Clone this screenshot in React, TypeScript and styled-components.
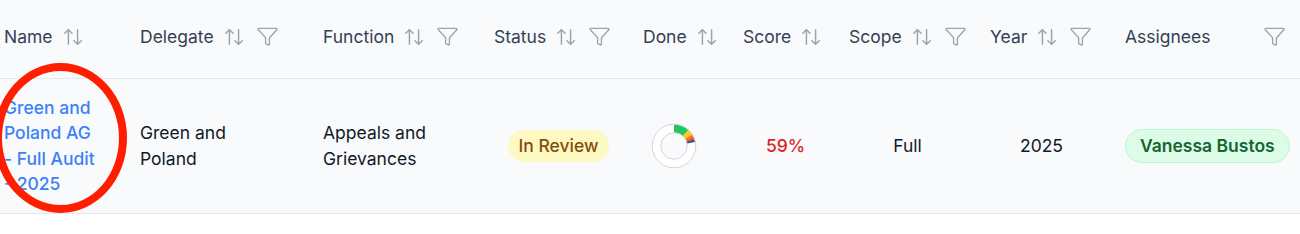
import React from "react";
import styled, { createGlobalStyle } from "styled-components";

const GlobalStyle = createGlobalStyle`
  html, body {
    margin: 0;
    padding: 0;
    background: #ffffff;
  }
  body {
    font-family: Inter, "Noto Sans", "Liberation Sans", sans-serif;
    -webkit-font-smoothing: antialiased;
  }
`;

type Column = {
  key: string;
  label: string;
  width: number;
  sortable?: boolean;
  filterable?: boolean;
  spread?: boolean;
};

const COLUMNS: Column[] = [
  { key: "name", label: "Name", width: 128, sortable: true },
  { key: "delegate", label: "Delegate", width: 183, sortable: true, filterable: true },
  { key: "function", label: "Function", width: 171, sortable: true, filterable: true },
  { key: "status", label: "Status", width: 149, sortable: true, filterable: true },
  { key: "done", label: "Done", width: 100, sortable: true },
  { key: "score", label: "Score", width: 106, sortable: true },
  { key: "scope", label: "Scope", width: 141, sortable: true, filterable: true },
  { key: "year", label: "Year", width: 135, sortable: true, filterable: true },
  { key: "assignees", label: "Assignees", width: 187, filterable: true, spread: true },
];

// slices of the "done" ring, in degrees clockwise from 12 o'clock
const DONE_SLICES = [
  { from: 0, to: 42, color: "#22c55e" },
  { from: 42, to: 58, color: "#facc15" },
  { from: 58, to: 65, color: "#f97316" },
  { from: 65, to: 71, color: "#ef4444" },
  { from: 71, to: 79, color: "#475569" },
];

const SortIcon = () => (
  <svg width="22" height="22" viewBox="0 0 24 24" fill="none" stroke="currentColor" strokeWidth="1.6" strokeLinecap="round" strokeLinejoin="round">
    <path d="m21 16-4 4-4-4" />
    <path d="M17 20V4" />
    <path d="m3 8 4-4 4 4" />
    <path d="M7 4v16" />
  </svg>
);

const FilterIcon = () => (
  <svg width="23" height="21" viewBox="0 0 24 22" fill="none" stroke="currentColor" strokeWidth="1.45" strokeLinecap="round" strokeLinejoin="round">
    <path d="M3 2.5h18a.9.9 0 0 1 .66 1.5l-7.2 8.1a2 2 0 0 0-.46 1.3V19a.9.9 0 0 1-1.3.8l-2.1-1.05a1 1 0 0 1-.6-.9v-4.9a2 2 0 0 0-.46-1.3L2.34 4A.9.9 0 0 1 3 2.5z" />
  </svg>
);

const polar = (r: number, deg: number) => {
  const a = ((deg - 90) * Math.PI) / 180;
  return [23 + r * Math.cos(a), 23 + r * Math.sin(a)];
};

const slicePath = (from: number, to: number, r1: number, r2: number) => {
  const [ax, ay] = polar(r2, from);
  const [bx, by] = polar(r2, to);
  const [cx, cy] = polar(r1, to);
  const [dx, dy] = polar(r1, from);
  const large = to - from > 180 ? 1 : 0;
  return `M${ax} ${ay} A${r2} ${r2} 0 ${large} 1 ${bx} ${by} L${cx} ${cy} A${r1} ${r1} 0 ${large} 0 ${dx} ${dy} Z`;
};

const DoneRing = () => (
  <svg width="46" height="46" viewBox="0 0 46 46">
    <circle cx="23" cy="23" r="17.5" fill="none" stroke="#ffffff" strokeWidth="9" />
    {DONE_SLICES.map((s) => (
      <path key={s.from} d={slicePath(s.from, s.to, 13.5, 21.5)} fill={s.color} />
    ))}
    <circle cx="23" cy="23" r="21.8" fill="none" stroke="#d1d5db" strokeWidth="1" />
    <circle cx="23" cy="23" r="13.2" fill="none" stroke="#d1d5db" strokeWidth="1" />
  </svg>
);

export default function App() {
  return (
    <>
      <GlobalStyle />
      <Frame>
        <Table>
          <colgroup>
            {COLUMNS.map((c) => (
              <col key={c.key} style={{ width: c.width }} />
            ))}
          </colgroup>
          <thead>
            <tr>
              {COLUMNS.map((c, i) => (
                <HeadCell key={c.key} $first={i === 0}>
                  <HeadInner $spread={c.spread}>
                    <HeadLabel>{c.label}</HeadLabel>
                    <Icons>
                      {c.sortable && (
                        <IconBtn>
                          <SortIcon />
                        </IconBtn>
                      )}
                      {c.filterable && (
                        <IconBtn>
                          <FilterIcon />
                        </IconBtn>
                      )}
                    </Icons>
                  </HeadInner>
                </HeadCell>
              ))}
            </tr>
          </thead>
          <tbody>
            <tr>
              <Cell $first>
                <NameLink href="#">Green and Poland AG - Full Audit - 2025</NameLink>
              </Cell>
              <Cell>
                <Wrap $width={110}>Green and Poland</Wrap>
              </Cell>
              <Cell>
                <Wrap $width={120}>Appeals and Grievances</Wrap>
              </Cell>
              <Cell $align="center" $padRight={8}>
                <StatusPill>In Review</StatusPill>
              </Cell>
              <Cell $align="center" $padRight={26}>
                <RingBox>
                  <DoneRing />
                </RingBox>
              </Cell>
              <Cell $align="center" $padRight={9}>
                <Score>59%</Score>
              </Cell>
              <Cell $align="center">Full</Cell>
              <Cell $align="center" $padRight={20}>2025</Cell>
              <Cell>
                <AssigneePill>Vanessa Bustos</AssigneePill>
              </Cell>
            </tr>
          </tbody>
        </Table>
        <Annotation />
      </Frame>
    </>
  );
}

const Frame = styled.div`
  position: relative;
  width: 1300px;
  height: 234px;
  overflow: hidden;
  background: #ffffff;
`;

const Table = styled.table`
  table-layout: fixed;
  border-collapse: collapse;
  width: 1300px;
  background: #f9fafb;
  font-size: 17.5px;
  color: #111827;
`;

const HeadCell = styled.th<{ $first?: boolean }>`
  height: 78px;
  padding: 0 14px 4px ${(p) => (p.$first ? "4px" : "12px")};
  border-bottom: 1px solid #e5e7eb;
  text-align: left;
  font-weight: 400;
  color: #334155;
  white-space: nowrap;
  box-sizing: border-box;
`;

const HeadInner = styled.div<{ $spread?: boolean }>`
  display: flex;
  align-items: center;
  justify-content: ${(p) => (p.$spread ? "space-between" : "flex-start")};
  gap: 9px;
`;

const HeadLabel = styled.span`
  line-height: 24px;
`;

const Icons = styled.span`
  display: flex;
  align-items: center;
  gap: 11px;
`;

const IconBtn = styled.span`
  display: inline-flex;
  color: #9ca3af;
`;

const Cell = styled.td<{ $first?: boolean; $align?: "left" | "center"; $padRight?: number }>`
  height: 135px;
  padding: 0 ${(p) => (p.$padRight ?? 12)}px 0 ${(p) => (p.$first ? "4px" : "12px")};
  border-bottom: 1px solid #e5e7eb;
  text-align: ${(p) => p.$align ?? "left"};
  vertical-align: middle;
  line-height: 25.5px;
  box-sizing: border-box;
`;

const NameLink = styled.a`
  display: block;
  width: 98px;
  color: #3b82f6;
  font-weight: 500;
  text-decoration: none;
`;

const Wrap = styled.div<{ $width: number }>`
  max-width: ${(p) => p.$width}px;
`;

const StatusPill = styled.span`
  display: inline-flex;
  align-items: center;
  height: 32px;
  padding: 0 11px;
  border-radius: 16px;
  background: #fef9c3;
  color: #854d0e;
  font-weight: 500;
`;

const RingBox = styled.div`
  display: flex;
  justify-content: center;
`;

const Score = styled.span`
  color: #dc2626;
  font-weight: 500;
`;

const AssigneePill = styled.span`
  display: inline-flex;
  align-items: center;
  height: 32px;
  padding: 0 14px;
  border: 1px solid #bbf7d0;
  border-radius: 17px;
  background: #dcfce7;
  color: #166534;
  font-weight: 600;
  white-space: nowrap;
`;

// red hand-drawn style marker circled over the first cell
const Annotation = styled.div`
  position: absolute;
  left: -6px;
  top: 63px;
  width: 133px;
  height: 150px;
  box-sizing: border-box;
  border: 8px solid #ff1f00;
  border-radius: 50%;
  pointer-events: none;
`;
